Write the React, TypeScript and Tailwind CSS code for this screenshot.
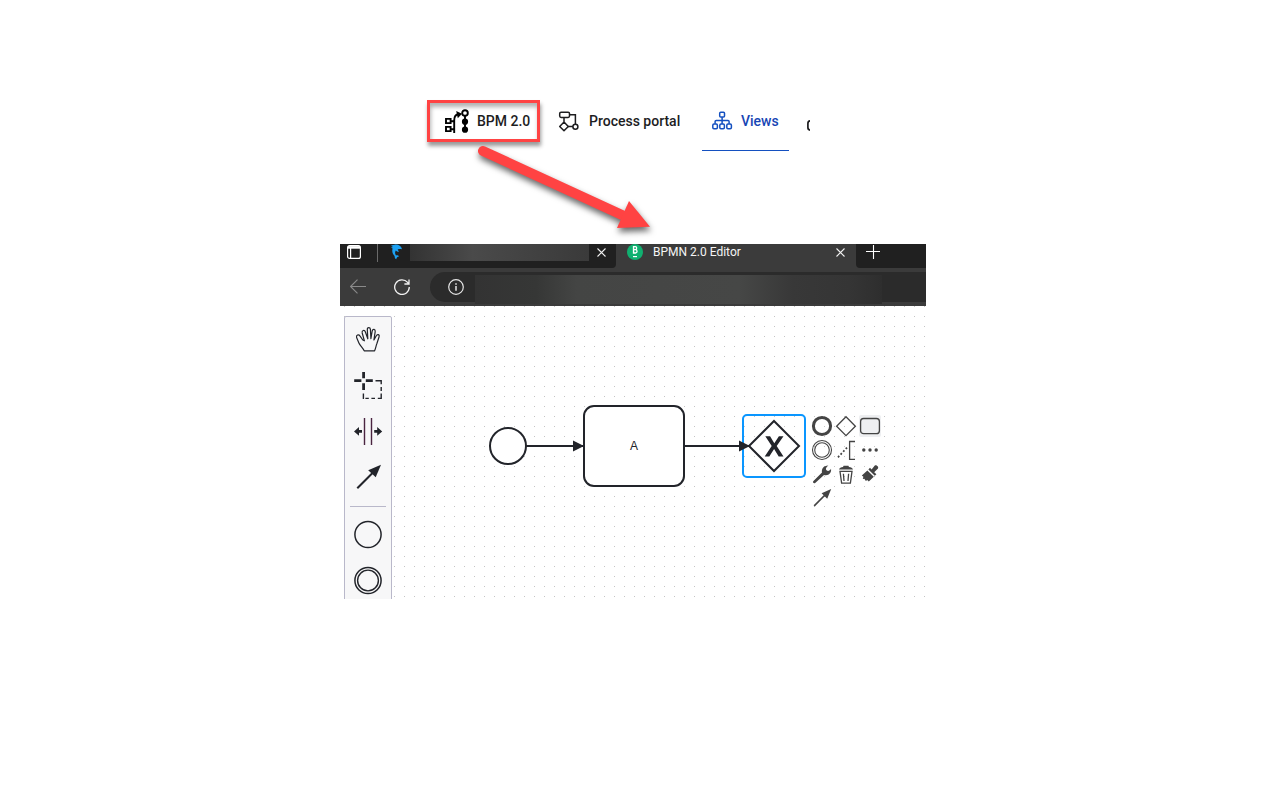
import type { ReactNode } from "react";

type IconProps = { children: ReactNode; className?: string };

function PaletteIcon({ children }: IconProps) {
  return (
    <svg className="size-[30px] shrink-0" viewBox="0 0 30 30" fill="none" stroke="#22242a" strokeWidth="1.5" aria-hidden="true">
      {children}
    </svg>
  );
}

function PadIcon({ children }: IconProps) {
  return (
    <svg className="size-[22px] shrink-0" viewBox="0 0 22 22" fill="none" stroke="#444444" strokeWidth="1.3" aria-hidden="true">
      {children}
    </svg>
  );
}

const tools: { label: string; icon: ReactNode }[] = [
  {
    label: "Activate hand tool",
    icon: (
      <path
        strokeWidth="1.2"
        strokeLinejoin="round"
        d="M11.2 25.8 C9.8 23 7 20.6 5.9 18 L3.6 12.6 C2.9 10.2 5.6 8.8 6.9 10.9 L9.8 15 L11.4 15.8 L9.2 8 C8.6 5.2 11.5 4.4 12.4 7 L14.8 13.8 L14.3 4.4 C14.3 1.9 17.2 1.9 17.4 4.4 L17.9 13.6 L19.2 6 C19.8 3.6 22.5 4 22.2 6.6 L20.9 15 L23.3 10.7 C24.4 8.6 26.8 9.6 26.1 11.8 L23.9 18.5 C22.9 21 22.8 23 21.6 25.8 Z"
      />
    ),
  },
  {
    label: "Activate lasso tool",
    icon: (
      <>
        <path strokeWidth="2.8" d="M10.6 1v6.2M10.6 12.2v6.8M1.2 9.6h7.2M12.8 9.6h7" />
        <path strokeWidth="1.4" d="M22.5 9.8h5.7v3.4M28.2 16v4M28.2 22.6v4.8h-3.4M22 27.4h-3.6M15.8 27.4h-3.4M10.4 22.4v5h0.6" />
      </>
    ),
  },
  {
    label: "Activate create/remove space tool",
    icon: (
      <>
        <path stroke="#4a2440" strokeWidth="1.4" d="M11.5 1v27M18.5 1v27" />
        <path fill="#22242a" stroke="none" d="M1 14.4l5-4.4v3h3v2.8H6v3zM29.2 14.4l-5-4.4v3h-3v2.8h3v3z" />
      </>
    ),
  },
  {
    label: "Activate global connect tool",
    icon: (
      <>
        <path strokeWidth="2" d="M4.3 25.3L20 9.5" />
        <path fill="#22242a" stroke="none" d="M28 1.8L15.2 7.2L22.7 14.2z" />
      </>
    ),
  },
];

const events: { label: string; icon: ReactNode }[] = [
  { label: "Create start event", icon: <circle cx="15" cy="14.5" r="13.1" strokeWidth="1.5" /> },
  {
    label: "Create intermediate event",
    icon: (
      <>
        <circle cx="15" cy="14.5" r="13.1" strokeWidth="1.5" />
        <circle cx="15" cy="14.5" r="10.4" strokeWidth="1.4" />
      </>
    ),
  },
];

const padEntries: { label: string; active?: boolean; icon: ReactNode }[] = [
  { label: "Append end event", icon: <circle cx="11" cy="11" r="8.6" strokeWidth="3" /> },
  { label: "Append gateway", icon: <path d="M11 1.7L20.4 11.2L11 20.6L1.6 11.2z" /> },
  { label: "Append task", active: true, icon: <rect x="1.6" y="3.5" width="18.8" height="15.2" rx="3" /> },
  {
    label: "Append intermediate event",
    icon: (
      <>
        <circle cx="11" cy="11" r="9.5" strokeWidth="1.1" />
        <circle cx="11" cy="11" r="7.3" strokeWidth="1.1" />
      </>
    ),
  },
  {
    label: "Add text annotation",
    icon: (
      <>
        <path d="M20 2.5h-5.4v17.8H20" />
        <path strokeWidth="1.8" strokeDasharray="1.8 2" d="M3 18.3L12.6 8" />
      </>
    ),
  },
  {
    label: "Append element",
    icon: (
      <g fill="#444444" stroke="none">
        <circle cx="4.8" cy="11" r="1.7" />
        <circle cx="11" cy="11" r="1.7" />
        <circle cx="17.2" cy="11" r="1.7" />
      </g>
    ),
  },
  {
    label: "Change element",
    icon: (
      <path
        fill="#444444"
        stroke="none"
        d="M2.2 18.2L11 9.6C10.3 6 12.4 2.8 17.3 2.6C14.6 4.6 14.3 6.6 15.8 7.6C17.2 8.5 19 7.7 20 5.8C20.8 10 17.6 13.2 13 12L4.2 20C2.8 20.6 1.6 19.6 2.2 18.2z"
      />
    ),
  },
  {
    label: "Delete",
    icon: (
      <>
        <path fill="#444444" stroke="none" d="M4 6.6C4.4 5 6 4.3 8 4.1L8.6 2.8h4.8L14 4.1C16 4.3 17.6 5 18 6.6z" />
        <path d="M5 8.4L6.6 20.2h8.8L17 8.4zM8.4 10.8L9 18M13.6 10.8L13 18" />
      </>
    ),
  },
  {
    label: "Set color",
    icon: (
      <>
        <path fill="#444444" stroke="none" d="M15.8 2.4C17.5 1.7 20 3.8 19 5.4L15.2 9.2L17.4 11.2L15.8 12.8L9.4 6.4L11 4.8L12.6 6.6z" />
        <path fill="#444444" stroke="none" d="M8.4 7.4L14.8 13.8L9.8 18.6L8.2 17L6.9 18L5.3 15.7L3.8 15.9L4.4 13.8L2.8 12.4z" />
      </>
    ),
  },
  {
    label: "Connect to other element",
    icon: (
      <>
        <path strokeWidth="1.7" d="M3.2 18.8L14 8" />
        <path fill="#444444" stroke="none" d="M20.2 2L10.6 6.2L16.2 11.7z" />
      </>
    ),
  },
];

function CloseIcon() {
  return (
    <svg className="size-[9px]" viewBox="0 0 9 9" stroke="#f2f2f2" strokeWidth="1.1" aria-hidden="true">
      <path d="M0.5 0.5l8 8M8.5 0.5l-8 8" />
    </svg>
  );
}

function PortalNav() {
  return (
    <nav className="ml-[87px] flex w-[383px] items-start overflow-visible text-sm font-medium text-[#1d1d1f]">
      <a href="#bpm" className="flex h-[42px] w-[113px] items-center gap-2 border-[3px] border-[#ff4343] pl-[15px] whitespace-nowrap shadow-[1px_4px_4px_rgba(0,0,0,0.4),inset_1px_4px_4px_rgba(0,0,0,0.3)]">
        <svg className="size-6 shrink-0" viewBox="0 0 24 24" fill="none" stroke="#000" strokeWidth="1.9" aria-hidden="true">
          <path d="M1 9.9h4.6v4.2H1zM1 17.9h4.6v4.2H1zM6 12.2h3M6 20.2h3M9.2 24V11.5C9.2 7.5 10.5 5.3 13.5 5.2" />
          <path fill="#000" stroke="none" d="M11.2 2l5.8 2.7-4.2 4.5z" />
          <circle cx="20" cy="4" r="2.8" />
          <path d="M20 7v13" />
          <circle cx="20" cy="12.7" r="3.1" fill="#000" stroke="none" />
          <circle cx="20" cy="20.7" r="3.1" fill="#000" stroke="none" />
        </svg>
        BPM 2.0
      </a>
      <a href="#portal" className="ml-[18px] flex h-[42px] w-32 items-center gap-[9px] whitespace-nowrap">
        <svg className="size-[22px] shrink-0" viewBox="0 0 22 22" fill="none" stroke="#1d1d1f" strokeWidth="1.5" aria-hidden="true">
          <rect x="1.7" y="2.2" width="9.8" height="5.2" rx="1.4" />
          <path d="M11.6 4.7h5.8v9.6M6 7.4v4.4M10 16.4h5" />
          <circle cx="17.4" cy="16.8" r="2.5" />
          <path strokeLinejoin="round" d="M6 12l4.3 4.4L6 20.8 1.7 16.4z" />
        </svg>
        Process portal
      </a>
      <a href="#views" aria-current="page" className="ml-4 flex h-[51px] w-[87px] items-start border-b border-[#1450c0] text-[#1746b5]">
        <span className="flex h-[42px] items-center gap-2 pl-[9px]">
          <svg className="size-[22px] shrink-0" viewBox="0 0 22 22" fill="none" stroke="#1450c0" strokeWidth="1.5" aria-hidden="true">
            <rect x="8.7" y="2.2" width="4.8" height="4.8" rx="1" />
            <rect x="1.8" y="14" width="4.6" height="4.8" rx="1.2" />
            <rect x="8.8" y="14" width="4.6" height="4.8" rx="1.2" />
            <rect x="15.8" y="14" width="4.6" height="4.8" rx="1.2" />
            <path d="M11.1 7v7M4.1 13.8v-2.2c0-.7.4-1.1 1.1-1.1H17c.7 0 1.1.4 1.1 1.1v2.2" />
          </svg>
          Views
        </span>
      </a>
      <svg className="mt-5 ml-[18px] h-[11px] w-[3px] shrink-0 overflow-hidden" viewBox="0 0 3 11" fill="none" stroke="#1d1d1f" strokeWidth="1.7" aria-hidden="true">
        <rect x="0.9" y="0.9" width="8" height="9.2" rx="2.5" />
      </svg>
    </nav>
  );
}

function BrowserChrome() {
  return (
    <header className="bg-[#3b3b3b]">
      <div className="flex h-6 items-stretch">
        <div className="flex w-[276px] items-start rounded-br bg-[#202020]">
          <button type="button" aria-label="Tab actions" className="ml-[7px] flex h-4 w-[30px] items-center">
            <svg className="size-3.5" viewBox="0 0 14 14" fill="none" stroke="#fff" strokeWidth="1.2" aria-hidden="true">
              <rect x="0.6" y="0.6" width="12.8" height="12.8" rx="2" />
              <path strokeWidth="2.6" d="M1 2.4h12" />
              <path d="M3.6 3v10" />
            </svg>
          </button>
          <span className="h-[18px] w-px bg-[#6a6a6a]" />
          <svg className="ml-3 h-4 w-4 shrink-0" viewBox="0 0 16 16" fill="#1da1f2" aria-hidden="true">
            <path d="M1 1.8C2.4 1.2 4.4 1.2 5.6 0.6C8.4 0.4 11.2 2 12 5.2C10.6 5 9.4 4.8 7.6 5.4L9 7.8C7.4 7.8 6.6 7 5.8 6.4C4.8 8 4.8 9.8 6 11.4C7.4 11.2 8.2 11.4 9 12.4C7.4 12.6 6.6 13.4 6.2 15.2C5 14.6 4.6 13.4 4.6 12C2.4 10 1.8 7.4 2.6 4.4L1 3.6L3 3z" />
          </svg>
          <span className="ml-1 h-[17px] w-[179px] bg-linear-to-r from-[#333333] via-[#4a4a4a] via-35% to-[#3a3a3a]" />
          <button type="button" aria-label="Close tab" className="ml-2 flex h-4 w-[9px] items-center">
            <CloseIcon />
          </button>
        </div>
        <div className="flex w-60 items-start pl-[11px]">
          <svg className="h-4 w-4 shrink-0" viewBox="0 0 16 16" aria-hidden="true">
            <circle cx="8" cy="8" r="8" fill="#10b070" />
            <path fill="none" stroke="#fff" strokeWidth="1.3" d="M6.5 2.6h1.9c1.7 0 1.7 3 0 3H6.6h2c1.9 0 1.9 3.4 0 3.4H6.5zM6.6 2v7.6" />
            <path stroke="#fff" strokeWidth="1.2" d="M6 12.6h4" />
          </svg>
          <span className="ml-2.5 grow font-['Roboto',sans-serif] text-xs leading-4 text-[#f5f5f5]">BPMN 2.0 Editor</span>
          <button type="button" aria-label="Close tab" className="mr-[11px] flex h-4 w-[9px] items-center">
            <CloseIcon />
          </button>
        </div>
        <div className="flex grow items-start rounded-bl bg-[#202020] pl-2.5">
          <button type="button" aria-label="New tab" className="flex h-4 items-center">
            <svg className="size-[14px]" viewBox="0 0 14 14" stroke="#fff" strokeWidth="1.1" aria-hidden="true">
              <path d="M7.5 0v14M0 6.5h14" />
            </svg>
          </button>
        </div>
      </div>
      <div className="flex h-[38px] items-center">
        <button type="button" aria-label="Back" className="ml-2.5">
          <svg className="size-4" viewBox="0 0 16 16" fill="none" stroke="#8a8a8a" strokeWidth="1.1" aria-hidden="true">
            <path d="M0.5 7.5H16M7.5 0.7L0.6 7.5l6.9 6.8" />
          </svg>
        </button>
        <button type="button" aria-label="Reload" className="ml-7">
          <svg className="size-4" viewBox="0 0 16 16" fill="none" stroke="#f2f2f2" strokeWidth="1.3" aria-hidden="true">
            <path d="M15.3 8A7.3 7.3 0 1 1 13.6 3.4L15 5M15 0.4V5H10.4" />
          </svg>
        </button>
        <div className="ml-5 flex h-[30px] grow items-center rounded-l-full bg-[#2b2b2b] pl-[18px]">
          <svg className="size-4 shrink-0" viewBox="0 0 16 16" fill="none" stroke="#e6e6e6" strokeWidth="1.2" aria-hidden="true">
            <circle cx="8" cy="8" r="7.3" />
            <path strokeWidth="1.5" d="M8 7v4.8M8 4.2v1.6" />
          </svg>
          <input
            type="text"
            aria-label="Address"
            className="mt-1 ml-[11px] h-[29px] w-[407px] bg-[linear-gradient(to_right,#333333_0%,#363736_15%,#444544_25%,#464746_65%,#383838_78%,#353535_92%,#2e2e2e_100%)] outline-none"
          />
        </div>
      </div>
    </header>
  );
}

function Diagram() {
  return (
    <svg className="absolute inset-0 size-full" aria-label="Process diagram" fill="none">
      <defs>
        <pattern id="grid" width="10" height="10" patternUnits="userSpaceOnUse">
          <rect x="4" y="0" width="1" height="1" fill="#c4c4c4" />
        </pattern>
        <marker id="flow-end" viewBox="0 0 11 12" refX="11" refY="6" markerWidth="11" markerHeight="12" markerUnits="userSpaceOnUse">
          <path d="M0 0.5L11 6L0 11.5z" fill="#22242a" />
        </marker>
      </defs>
      <rect width="100%" height="100%" fill="url(#grid)" />
      <rect x="403" y="109" width="62" height="62" rx="4" stroke="#0a96ff" strokeWidth="2" />
      <g stroke="#22242a" strokeWidth="2">
        <circle cx="168" cy="140" r="18" fill="#fff" />
        <rect x="244" y="100" width="100" height="80" rx="10" fill="#fff" />
        <path d="M434 115l25 25-25 25-25-25z" fill="#fff" />
        <path d="M186 140h58" markerEnd="url(#flow-end)" />
        <path d="M344 140h66" markerEnd="url(#flow-end)" />
      </g>
      <path fill="#22242a" d="M425.3 130.3h4.8l4.2 7 4.6-7h4.6l-6.8 9.8 6.8 10.3h-4.8l-4.6-7.4-4.8 7.4h-4.6l7-10.3z" />
      <text x="294" y="144" textAnchor="middle" fontSize="12" fill="#22242a" className="font-['Liberation_Sans',Arial,sans-serif]">
        A
      </text>
    </svg>
  );
}

function ToolButton({ label, icon }: { label: string; icon: ReactNode }) {
  return (
    <button type="button" aria-label={label} className="flex h-[46px] w-full items-center justify-center">
      <PaletteIcon>{icon}</PaletteIcon>
    </button>
  );
}

function Editor() {
  return (
    <section className="mt-[93px] w-[586px] max-w-full overflow-hidden">
      <BrowserChrome />
      <div className="relative h-[293px] overflow-hidden bg-white pt-2.5 pl-1">
        <Diagram />
        <div className="relative w-12 rounded-t-[2px] border border-[#b9b8ca] bg-[#f7f7f8]">
          {tools.map((tool) => (
            <ToolButton key={tool.label} {...tool} />
          ))}
          <hr className="mx-[5px] my-[5px] border-[#b9b8ca]" />
          {events.map((tool) => (
            <ToolButton key={tool.label} {...tool} />
          ))}
        </div>
        <div className="absolute top-[109px] left-[471px] grid grid-cols-3 gap-0.5">
          {padEntries.map(({ label, active, icon }) => (
            <button key={label} type="button" aria-label={label} className={active ? "rounded-[2px] bg-[#eeeff1]" : "rounded-[2px]"}>
              <PadIcon>{icon}</PadIcon>
            </button>
          ))}
        </div>
      </div>
    </section>
  );
}

export default function App() {
  return (
    <main className="flex min-h-screen justify-center bg-white pt-[100px] font-[Roboto,sans-serif]">
      <div className="relative w-[600px] max-w-full">
        <PortalNav />
        <Editor />
        <svg
          className="pointer-events-none absolute top-10 left-[130px] h-[100px] w-[190px] drop-shadow-[1px_4px_3px_rgba(0,0,0,0.6)]"
          viewBox="0 0 190 100"
          aria-hidden="true"
        >
          <path d="M13 11L152 75" stroke="#ff4343" strokeWidth="10" strokeLinecap="round" />
          <path d="M159 61L180 86.7L147 88z" fill="#ff4343" />
        </svg>
      </div>
    </main>
  );
}
